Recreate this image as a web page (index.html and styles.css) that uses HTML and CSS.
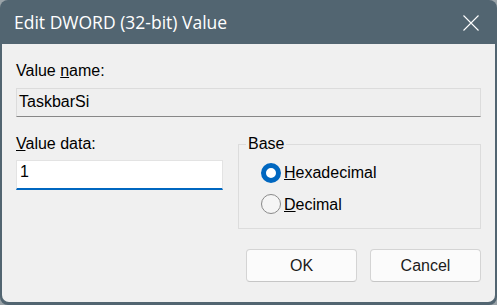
FILE: index.html
```html
<!DOCTYPE html>
<html>
<head>
<meta charset="utf-8">
<link rel="stylesheet" href="styles.css">
</head>
<body>
<div class="window">
  <div class="titlebar">
    <span class="title">Edit DWORD (32-bit) Value</span>
    <svg class="close" width="16" height="16" viewBox="0 0 16 16"><path d="M0.5 0.5 L15.5 15.5 M15.5 0.5 L0.5 15.5" stroke="#fff" stroke-width="1.1" fill="none"/></svg>
  </div>
  <div class="content">
    <div class="label">Value <u>n</u>ame:</div>
    <div class="readonly">TaskbarSi</div>
    <div class="row">
      <div class="left">
        <div class="label"><u>V</u>alue data:</div>
        <div class="input">1</div>
      </div>
      <fieldset class="group">
        <legend>Base</legend>
        <div class="radio-row first"><span class="radio checked"></span><span class="rlabel"><u>H</u>exadecimal</span></div>
        <div class="radio-row second"><span class="radio"></span><span class="rlabel"><u>D</u>ecimal</span></div>
      </fieldset>
    </div>
    <div class="buttons">
      <div class="btn">OK</div>
      <div class="btn">Cancel</div>
    </div>
  </div>
</div>
</body>
</html>
```
FILE: styles.css
```css
html, body {
  margin: 0;
  padding: 0;
  background: #9aa3a8;
}
.window {
  width: 497px;
  height: 305px;
  box-sizing: border-box;
  background: #526571;
  border-radius: 8px;
  display: flex;
  flex-direction: column;
  overflow: hidden;
}
.titlebar {
  height: 44px;
  flex: none;
  display: flex;
  align-items: center;
  justify-content: space-between;
  padding: 0 18px 0 14px;
}
.title {
  font-family: "Open Sans", sans-serif;
  font-size: 17.5px;
  line-height: 44px;
  color: #ffffff;
}
.close {
  display: block;
  margin-top: 1px;
}
.content {
  flex: 1;
  margin: 0 2px 3px 2px;
  background: #f0f0f0;
  border-radius: 0 0 7px 7px;
  padding: 18px 14px 0 14px;
  font-family: "Liberation Sans", Arial, sans-serif;
  font-size: 16px;
  line-height: 18px;
  color: #000;
}
.label {
  height: 18px;
}
.readonly {
  margin-top: 8px;
  height: 29px;
  box-sizing: border-box;
  border: 1px solid #dcdcdc;
  border-bottom-color: #878787;
  background: #efefef;
  padding: 0 3px 1px 2px;
  line-height: 26px;
}
.row {
  margin-top: 18px;
  display: grid;
  grid-template-columns: 207px 243px;
  column-gap: 15px;
  align-items: start;
}
.left .input {
  margin-top: 7px;
  height: 30px;
  box-sizing: border-box;
  background: #ffffff;
  border: 1px solid #e3e3e3;
  border-bottom: 2px solid #0067c0;
  padding: 2px 3px 0 3px;
  line-height: 18px;
}
.group {
  margin: 0;
  padding: 0 0 14px 22px;
  border: 1px solid #dcdcdc;
  min-width: 0;
}
.group legend {
  padding: 0 2px;
  line-height: 18px;
  margin-left: -15px;
}
.radio-row {
  display: flex;
  align-items: center;
  height: 20px;
  margin-top: 11px;
  line-height: 20px;
}
.radio-row.first {
  margin-top: 10px;
}
.radio-row.second .rlabel {
  padding-top: 2px;
}
.radio {
  width: 20px;
  height: 20px;
  box-sizing: border-box;
  border-radius: 50%;
  border: 1px solid #8a8a8a;
  background: #f5f5f5;
  flex: none;
}
.radio.checked {
  border: 5px solid #0067c0;
  background: #ffffff;
}
.rlabel {
  margin-left: 3px;
}
.buttons {
  margin-top: 20px;
  display: flex;
  justify-content: flex-end;
  gap: 13px;
}
.btn {
  width: 111px;
  height: 33px;
  box-sizing: border-box;
  border: 1px solid #d4d4d4;
  border-bottom-color: #c6c6c6;
  border-radius: 4px;
  background: #fbfbfb;
  display: flex;
  align-items: center;
  justify-content: center;
  color: #1b1b1b;
}
```
